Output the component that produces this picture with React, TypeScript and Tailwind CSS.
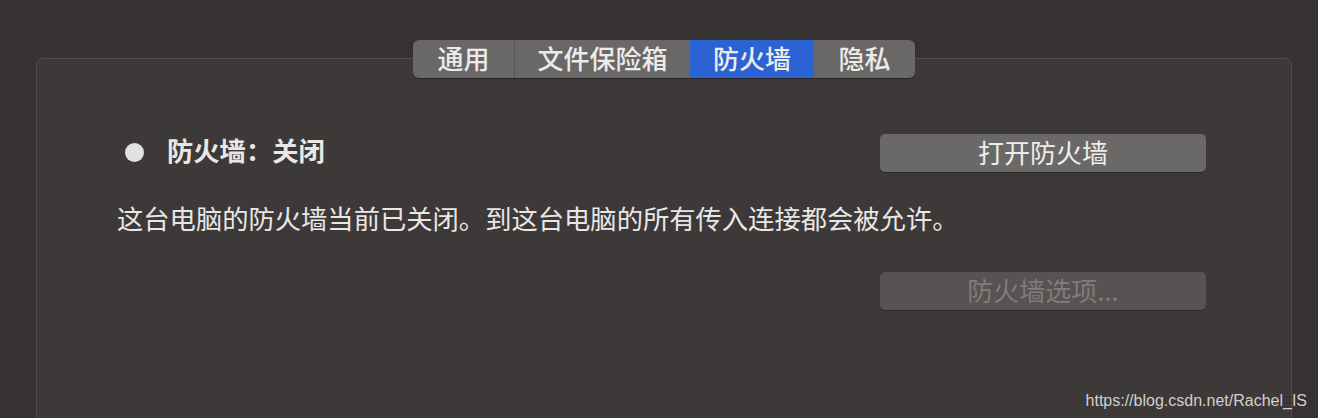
import React from 'react';

const tabs = [
  { label: '通用', w: 'w-[101px]' },
  { label: '文件保险箱', w: 'w-[176px]' },
  { label: '防火墙', w: 'w-[124px]', active: true },
  { label: '隐私', w: 'w-[101px]' },
];

const cjk = "font-['PingFang_SC','Noto_Sans_CJK_SC',sans-serif]";

export default function App() {
  return (
    <div className={`relative w-[1318px] h-[418px] overflow-hidden bg-[#353231] pt-[40px] pl-[36px] pr-[26px] ${cjk}`}>
      {/* Segmented tab control */}
      <div className="relative z-10 flex justify-center">
        <div className="flex h-[38px] rounded-[6px] overflow-hidden bg-[#6a6867] shadow-[0_1px_1px_rgba(0,0,0,0.35)]">
          {tabs.map((t, i) => (
            <div
              key={t.label}
              className={`${t.w} flex items-center justify-center pb-[2px] text-[26px] font-medium leading-none text-[#ecebea] ${
                t.active ? 'bg-[#2b63d4]' : ''
              } ${i === 1 ? 'border-l border-[#565453]' : ''}`}
            >
              {t.label}
            </div>
          ))}
        </div>
      </div>

      {/* Panel */}
      <div className="-mt-[20px] h-[400px] rounded-[7px] border border-[#4f4c4b] bg-[#3c3938] pt-[75px] pl-[80px] pr-[85px]">
        <div className="flex items-center justify-between h-[38px]">
          <div className="flex items-center">
            <span className="ml-[8px] w-[19px] h-[19px] rounded-full bg-[#e2e1e0]" />
            <span className="ml-[23px] pb-[5px] text-[26.3px] font-semibold leading-none text-[#e8e7e6]">防火墙：关闭</span>
          </div>
          <button className="w-[326px] h-[38px] pb-[3px] rounded-[5px] bg-[#6b6968] text-[26px] leading-none text-[#eeedec] shadow-[0_1px_1px_rgba(0,0,0,0.3)]">
            打开防火墙
          </button>
        </div>

        <p className="mt-[28px] h-[36px] flex items-center text-[26.3px] leading-none text-[#e8e7e6]">
          这台电脑的防火墙当前已关闭。到这台电脑的所有传入连接都会被允许。
        </p>

        <div className="mt-[36px] flex justify-end">
          <button className="w-[326px] h-[38px] pb-[3px] rounded-[5px] bg-[#565352] text-[26px] leading-none text-[#7f7c7b] shadow-[0_1px_1px_rgba(0,0,0,0.25)]">
            防火墙选项...
          </button>
        </div>
      </div>

      {/* Watermark */}
      <span className="absolute right-[11px] bottom-[9px] font-['Liberation_Sans',Arial,sans-serif] text-[16px] leading-none text-[#d2d0cf]">
        https://blog.csdn.net/Rachel_IS
      </span>
    </div>
  );
}
